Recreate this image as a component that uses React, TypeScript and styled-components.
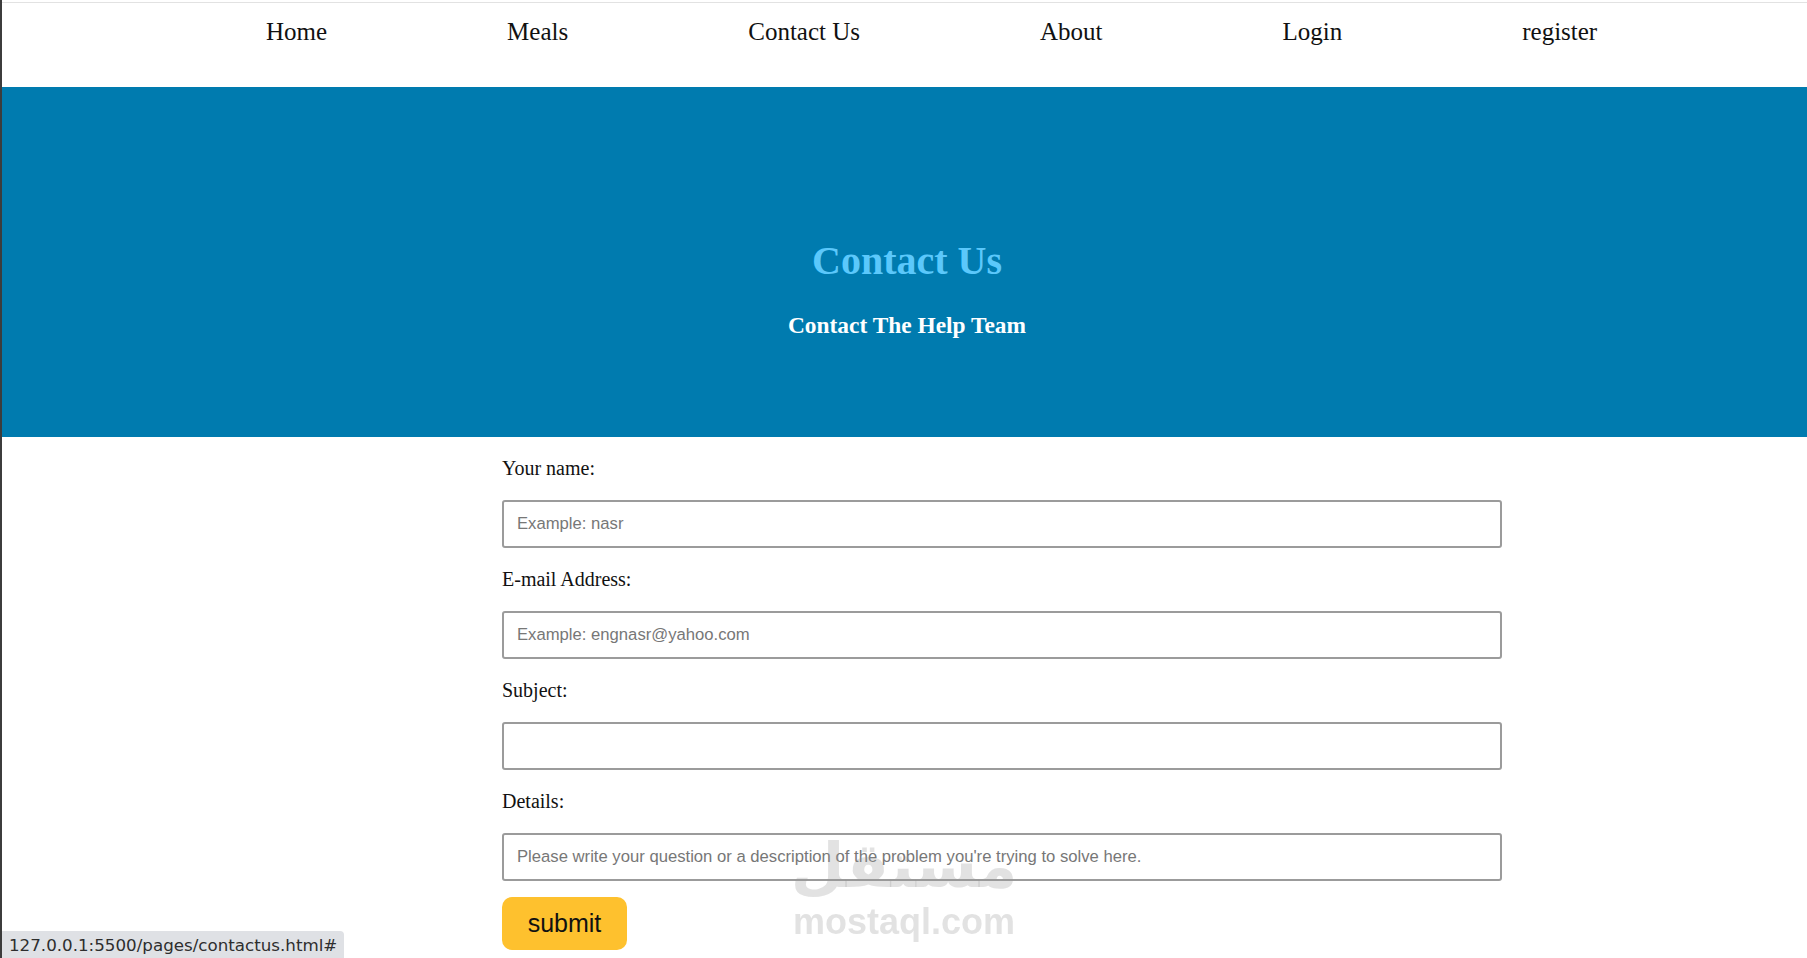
// Contact page: top nav, blue hero, and the help form
import styled, { createGlobalStyle } from "styled-components";

const GlobalStyle = createGlobalStyle`
  html, body {
    margin: 0;
    padding: 0;
    background: #ffffff;
  }
  * {
    box-sizing: border-box;
  }
`;

const navItems = ["Home", "Meals", "Contact Us", "About", "Login", "register"];

const fields = [
  { label: "Your name:", placeholder: "Example: nasr" },
  { label: "E-mail Address:", placeholder: "Example: engnasr@yahoo.com" },
  { label: "Subject:", placeholder: "" },
  {
    label: "Details:",
    placeholder:
      "Please write your question or a description of the problem you're trying to solve here.",
  },
];

const App = () => {
  return (
    <>
      <GlobalStyle />
      <Page>
        <NavBar>
          <NavList>
            {navItems.map((item) => (
              <NavItem key={item}>
                <NavLink href="#">{item}</NavLink>
              </NavItem>
            ))}
          </NavList>
        </NavBar>

        <Hero>
          <HeroTitle>Contact Us</HeroTitle>
          <HeroSubtitle>Contact The Help Team</HeroSubtitle>
        </Hero>

        <ContactForm onSubmit={(e) => e.preventDefault()}>
          {fields.map((f) => (
            <Field key={f.label}>
              <FieldLabel>{f.label}</FieldLabel>
              <FieldInput type="text" placeholder={f.placeholder} />
            </Field>
          ))}
          <SubmitButton type="submit">submit</SubmitButton>
        </ContactForm>
      </Page>

      <Watermark>
        <WatermarkArabic>مستقل</WatermarkArabic>
        <WatermarkLatin>mostaql.com</WatermarkLatin>
      </Watermark>

      <StatusBar>127.0.0.1:5500/pages/contactus.html#</StatusBar>
    </>
  );
};

export default App;

const Page = styled.div`
  min-height: 100vh;
  border-left: 2px solid #3c3c3c;
  padding-top: 2px;
  font-family: "Liberation Serif", "Times New Roman", serif;
  color: #111;
`;

const NavBar = styled.nav`
  height: 85px;
  border-top: 1px solid #e2e2e2;
`;

const NavList = styled.ul`
  display: flex;
  align-items: flex-start;
  gap: 180px;
  list-style: none;
  margin: 0;
  padding: 14px 0 0 264px;
`;

const NavItem = styled.li`
  font-size: 25px;
  line-height: 29px;
`;

const NavLink = styled.a`
  color: #111;
  text-decoration: none;
`;

const Hero = styled.section`
  height: 350px;
  background: #007baf;
  display: flex;
  flex-direction: column;
  align-items: center;
  padding: 151px 0 0 5px;
`;

const HeroTitle = styled.h1`
  margin: 0;
  font-size: 40px;
  line-height: 46px;
  font-weight: 700;
  color: #5bc8fb;
`;

const HeroSubtitle = styled.h3`
  margin: 28px 0 0;
  font-size: 23.4px;
  line-height: 27px;
  font-weight: 700;
  color: #ffffff;
`;

const ContactForm = styled.form`
  width: 1000px;
  margin-left: 500px;
  padding: 20px 0 40px;
`;

const Field = styled.div`
  margin-bottom: 20px;
`;

const FieldLabel = styled.label`
  display: block;
  font-size: 20px;
  line-height: 23px;
  margin-bottom: 20px;
  color: #111;
`;

const FieldInput = styled.input`
  display: block;
  width: 100%;
  height: 48px;
  padding: 0 13px;
  border: 2px solid #9b9b9b;
  border-radius: 3px;
  font-family: "Liberation Sans", Arial, sans-serif;
  font-size: 16.67px;
  color: #222;
  background: #fff;
  outline: none;

  &::placeholder {
    color: #777;
  }
`;

const SubmitButton = styled.button`
  display: block;
  width: 125px;
  height: 53px;
  margin-top: -4px;
  border: none;
  border-radius: 10px;
  background: #fec12e;
  color: #111;
  font-family: "Liberation Sans", Arial, sans-serif;
  font-size: 25px;
  cursor: pointer;
`;

const Watermark = styled.div`
  position: fixed;
  left: 794px;
  top: 830px;
  width: 220px;
  display: flex;
  flex-direction: column;
  align-items: center;
  pointer-events: none;
  color: rgba(150, 150, 150, 0.28);
`;

const WatermarkArabic = styled.div`
  font-family: "DejaVu Sans", sans-serif;
  font-weight: 700;
  font-size: 62px;
  line-height: 72px;
`;

const WatermarkLatin = styled.div`
  font-family: "Liberation Sans", Arial, sans-serif;
  font-weight: 700;
  font-size: 36px;
  line-height: 40px;
`;

const StatusBar = styled.div`
  position: fixed;
  left: 2px;
  bottom: 0;
  height: 27px;
  padding: 0 7px;
  display: flex;
  align-items: center;
  background: #dfe1e5;
  border-top-right-radius: 4px;
  font-family: "DejaVu Sans", sans-serif;
  font-size: 16.7px;
  color: #2e2e2e;
`;
